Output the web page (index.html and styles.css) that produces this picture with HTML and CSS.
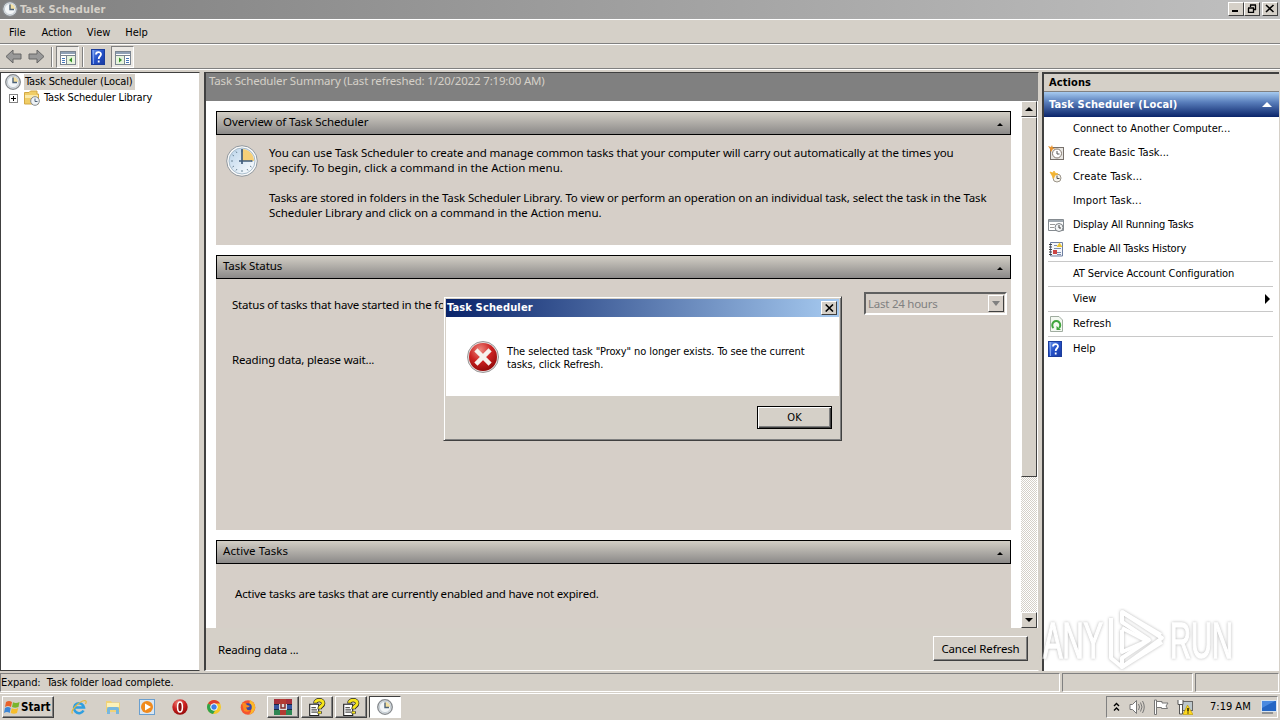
FILE: index.html
```html
<!DOCTYPE html>
<html lang="en">
<head>
    <meta charset="UTF-8">
    <meta name="viewport" content="width=device-width, initial-scale=1.0">
    <title>Task Scheduler</title>
    <link rel="stylesheet" href="styles.css">
</head>
<body>
    <!-- shared icons -->
    <svg class="defs">
        <defs>
            <linearGradient id="blueBook" x1="0" y1="0" x2="1" y2="1">
                <stop offset="0" stop-color="#6f9af0"/><stop offset=".5" stop-color="#2450c8"/><stop offset="1" stop-color="#1a3aa0"/>
            </linearGradient>
            <radialGradient id="redBall" cx=".4" cy=".25" r=".8">
                <stop offset="0" stop-color="#ee8a80"/><stop offset=".5" stop-color="#cc2222"/><stop offset="1" stop-color="#8e0808"/>
            </radialGradient>
            <linearGradient id="face" x1="0" y1="0" x2="1" y2="1">
                <stop offset="0" stop-color="#b9d3ea"/><stop offset="1" stop-color="#fff"/>
            </linearGradient>
            <symbol id="clock" viewBox="0 0 16 16">
                <circle cx="8" cy="8" r="7.3" fill="#e0e4e7" stroke="#85898d" stroke-width="1.3"/>
                <circle cx="8" cy="8" r="5.6" fill="#f3f6f8" stroke="#b5c0c8" stroke-width=".7"/>
                <path d="M8 8V3a5 5 0 0 1 5 5z" fill="#f3dfa0"/>
                <path d="M8 3.5V8.5H12" fill="none" stroke="#4d6378" stroke-width="1.4"/>
            </symbol>
            <symbol id="bigclock" viewBox="0 0 32 32">
                <circle cx="16" cy="16" r="15.3" fill="#fbfbfb" stroke="#8f969c" stroke-width="1"/>
                <circle cx="16" cy="16" r="13" fill="url(#face)" stroke="#a8bccb" stroke-width="1"/>
                <path d="M16 16V4a12 12 0 0 1 12 12z" fill="#f6cf78"/>
                <path d="M16 5v2M16 25v2M5 16h2M25 16h2M10 6.500l1 1.500M22 25.500l-1-1.500M6.500 22l1.500-1M6.500 10l1.500 1M25.500 22l-1.500-1M10 25.500l1-1.500" stroke="#6f8798"/>
                <path d="M16 4V19M13 16H26" stroke="#425d7c" stroke-width="1.700"/>
            </symbol>
            <symbol id="help" viewBox="0 0 14 16">
                <rect x=".5" y=".5" width="13" height="15" fill="url(#blueBook)" stroke="#1c3d9c"/>
                <path d="M2.500 1V15" stroke="#7da2ee"/>
                <path d="M5 5.500C5 2.300 10 2.300 10 5.300 10 7.300 7.700 7.300 7.700 10M7.700 11.500V13.500" fill="none" stroke="#fff" stroke-width="1.800"/>
            </symbol>
            <symbol id="window" viewBox="0 0 16 14">
                <rect x=".5" y=".5" width="15" height="13" fill="#fff" stroke="#7b8590"/>
                <path d="M1 2H15" stroke="#8fa0b5" stroke-width="2"/>
                <path d="M1 4.500H15" stroke="#7b8590"/>
            </symbol>
            <symbol id="notehelp" viewBox="0 0 16 16">
                <path d="M1.500 5.500H9.500V15.500H1.500z" fill="#fff" stroke="#222"/>
                <path d="M3 8.500H7M3 10.500H8M3 12.500H8" stroke="#555"/>
                <path d="M6.500 4.800C6.500 1 13.500 1 13.500 4.600 13.500 7.300 10.300 7 10.300 10M10.300 11.800V14" fill="none" stroke="#222" stroke-width="3.800"/>
                <path d="M6.500 4.300C6.500 1 13.500 1 13.500 4.600 13.500 7.300 10.300 7 10.300 9.500M10.300 12V13.800" fill="none" stroke="#f6e51c" stroke-width="2.600"/>
            </symbol>
        </defs>
    </svg>

    <div class="titlebar">
        <svg class="i16"><use href="#clock"/></svg>
        <span class="title">Task Scheduler</span>
        <div class="winbtns">
            <span class="winbtn"><svg width="10" height="9"><path d="M1 7H7" stroke="#000" stroke-width="2"/></svg></span>
            <span class="winbtn"><svg width="10" height="9"><path d="M3 1H9M3.500 1V3M8.500 1V6M7 5.500H9M1 4H7M1.500 4V8.500H6.500V4" fill="none" stroke="#000" stroke-width="1.300"/></svg></span>
            <span class="winbtn close"><svg width="10" height="9"><path d="M1 1L8.500 8M8.500 1L1 8" stroke="#000" stroke-width="1.600"/></svg></span>
        </div>
    </div>

    <div class="menubar">
        <span class="m-file">File</span><span class="m-action">Action</span><span class="m-view">View</span><span class="m-help">Help</span>
    </div>

    <div class="toolbar">
        <svg class="arrow" viewBox="0 0 17 15"><path d="M1 7.500L8 1V5H16V10H8V14z" fill="#999" stroke="#666"/></svg>
        <svg class="arrow" viewBox="0 0 17 15"><path d="M16 7.500L9 1V5H1V10H9V14z" fill="#999" stroke="#666"/></svg>
        <i class="vsep"></i>
        <span class="tool on"><svg width="17" height="14"><use href="#window" width="16" height="14"/><path d="M2 7.500H5M2 9.500H5M2 11.500H5" stroke="#4777b8"/><rect x="7" y="5" width="8" height="8" fill="#e7f4dd"/><path d="M6.500 5V13" stroke="#7b8590"/><path d="M12 6.500V11.500L9 9z" fill="#35912c"/></svg></span>
        <i class="vsep"></i>
        <svg class="booktool"><use href="#help"/></svg>
        <span class="tool on"><svg width="17" height="14"><use href="#window" width="16" height="14"/><path d="M11 7.500H14M11 9.500H14M11 11.500H14" stroke="#4777b8"/><rect x="1" y="5" width="8" height="8" fill="#e7f4dd"/><path d="M9.500 5V13" stroke="#7b8590"/><path d="M4 6.500V11.500L7 9z" fill="#35912c"/></svg></span>
    </div>

    <div class="panes">
        <div class="tree">
            <div class="node root"><svg class="i16"><use href="#clock"/></svg><span class="selected">Task Scheduler (Local)</span></div>
            <div class="node child">
                <svg class="plus" width="9" height="9"><rect x=".5" y=".5" width="8" height="8" fill="#fff" stroke="#848484"/><path d="M2 4.500H7M4.500 2V7" stroke="#000"/></svg>
                <svg class="i16" viewBox="0 0 16 16"><path d="M.5 2.500H5L6.500 1H13V4H14.500V14H.500z" fill="#f0cd66" stroke="#d3a843"/><path d="M1 5H14V8H1z" fill="#fae9a8"/><circle cx="11" cy="11" r="4.300" fill="#eef2f5" stroke="#84898e"/><path d="M11 8.500V11.500H13.500" fill="none" stroke="#4d6378"/></svg>
                <span>Task Scheduler Library</span>
            </div>
        </div>

        <div class="summary">
            <div class="summary-head">Task Scheduler Summary (Last refreshed: 1/20/2022 7:19:00 AM)</div>
            <div class="summary-body">
                <div class="cards">
                    <div class="card overview">
                        <div class="card-head"><span class="h1">Overview of Task Scheduler</span><i class="up"></i></div>
                        <div class="card-text">
                            <svg class="i32"><use href="#bigclock"/></svg>
                            <div>
                                <p class="l1">You can use Task Scheduler to create and manage common tasks that your computer will carry out automatically at the times you</p>
                                <p class="l2">specify. To begin, click a command in the Action menu.</p>
                                <p class="l3">Tasks are stored in folders in the Task Scheduler Library. To view or perform an operation on an individual task, select the task in the Task</p>
                                <p class="l4">Scheduler Library and click on a command in the Action menu.</p>
                            </div>
                        </div>
                    </div>
                    <div class="card status">
                        <div class="card-head"><span class="h2">Task Status</span><i class="up"></i></div>
                        <div class="filter">
                            <span class="period">Status of tasks that have started in the fo</span>
                            <div class="combo"><span>Last 24 hours</span><b><i></i></b></div>
                        </div>
                        <p class="reading">Reading data, please wait...</p>
                    </div>
                    <div class="card active">
                        <div class="card-head"><span class="h3">Active Tasks</span><i class="up"></i></div>
                        <p class="expired">Active tasks are tasks that are currently enabled and have not expired.</p>
                    </div>
                </div>
                <div class="scrollbar">
                    <span class="sbtn"><i class="tri-up"></i></span>
                    <span class="thumb"></span>
                    <span class="track"></span>
                    <span class="sbtn"><i class="tri-down"></i></span>
                </div>
            </div>
            <div class="summary-foot">
                <span class="busy">Reading data ...</span>
                <button class="cancel">Cancel Refresh</button>
            </div>
        </div>

        <div class="actions">
            <div class="actions-head">Actions</div>
            <div class="group"><span>Task Scheduler (Local)</span><i></i></div>
            <ul>
                <li><i class="ico"></i><span class="a1">Connect to Another Computer...</span></li>
                <li><i class="ico"><svg viewBox="0 0 16 16"><rect x="2.500" y="2.500" width="13" height="12" fill="#e8e6e2" stroke="#77706a"/><circle cx="9" cy="8.500" r="4.500" fill="#fff" stroke="#857a70"/><path d="M9 6V9H11.500" fill="none" stroke="#555"/><path d="M0 1L3 2 4 0 5 3 8 3 5 4 3 7 2 4z" fill="#e89432"/></svg></i><span class="a2">Create Basic Task...</span></li>
                <li><i class="ico"><svg viewBox="0 0 16 16"><circle cx="9" cy="9" r="4" fill="#f6f3ea" stroke="#9b958a"/><path d="M9 6.500V9.500H11.500" fill="none" stroke="#555"/><path d="M2 3L5 4 6 2 7 4 10 5 7 6 5.500 9.500 4 6.500z" fill="#f2b432" stroke="#f2b432" stroke-width=".800"/></svg></i><span class="a3">Create Task...</span></li>
                <li><i class="ico"></i><span class="a4">Import Task...</span></li>
                <li><i class="ico"><svg viewBox="0 0 16 16"><path d="M.500 2.500H15.500V13.500H.500z" fill="#fff" stroke="#858b90"/><path d="M1 4H15" stroke="#9fa8b0" stroke-width="2"/><path d="M2 7.500H7M2 10.500H6" stroke="#999"/><circle cx="11" cy="10.500" r="4" fill="#f2f4f5" stroke="#7b8085"/><path d="M11 8V11H13" fill="none" stroke="#444"/></svg></i><span class="a5">Display All Running Tasks</span></li>
                <li><i class="ico"><svg viewBox="0 0 16 16"><path d="M2.500 1.500H14.500V15H2.500z" fill="#f3f5fa" stroke="#6e7fa0"/><path d="M1 3.500H4M1 6H4M1 8.500H4M1 11H4M1 13.500H4" stroke="#444"/><path d="M6 4.500H9M6 7.500H13M9 11.500H13M9 13.500H13" stroke="#7b8cad"/><path d="M8.500 6L11.500 1.500 14.500 6z" fill="#edc52f"/><rect x="5" y="9" width="4" height="4" fill="#c44"/></svg></i><span class="a6">Enable All Tasks History</span></li>
                <li class="line"><i class="ico"></i><span class="a7">AT Service Account Configuration</span></li>
                <li class="line"><i class="ico"></i><span class="a8">View</span><i class="more"></i></li>
                <li class="line"><i class="ico"><svg viewBox="0 0 16 16"><path d="M2.500.500H11L14.500 4V15.500H2.500z" fill="#f4f9f2" stroke="#a0aca0"/><path d="M5.500 12A4 4 0 1 1 11 12" fill="none" stroke="#3fa53c" stroke-width="2"/><path d="M8.500 10V14H13z" fill="#3fa53c"/></svg></i><span class="a9">Refresh</span></li>
                <li class="line"><i class="ico"><svg viewBox="0 0 16 16"><use href="#help" width="14" height="16"/></svg></i><span class="a10">Help</span></li>
            </ul>
        </div>
    </div>

    <div class="statusbar">
        <div class="cell main">Expand:&nbsp; Task folder load complete.</div>
        <div class="cell mid"></div>
        <div class="cell last"></div>
    </div>

    <div class="taskbar">
        <button class="start">
            <svg width="16" height="16" viewBox="0 0 16 16"><path d="M2 3Q5 1 8 3L7 8Q4 6 1 8z" fill="#e8622a"/><path d="M9 3.300Q12 5 15.500 3L14.500 8Q11 9.500 8 8z" fill="#79b52d"/><path d="M1 9Q4 7 6.700 9L5.700 14Q3 12 0 14z" fill="#3c86d6"/><path d="M7.700 9.300Q11 11 14.200 9L13 14Q10 15.500 6.700 14z" fill="#f6bd2b"/></svg>
            <span>Start</span>
        </button>
        <div class="quick">
            <svg viewBox="0 0 16 16"><path d="M12.500 11.500A5 5 0 1 1 13 8.500H4" fill="none" stroke="#2f9fe0" stroke-width="2.500"/><path d="M1.500 14.500C-1 12 8 2 14 1.500 16 2 15 4 14.500 5" fill="none" stroke="#e6b93c" stroke-width="1.200"/></svg>
            <svg viewBox="0 0 16 16"><path d="M1 2H6L7 3.500H15V13H1z" fill="#f0d277"/><path d="M2 4H14V8H2z" fill="#fcf1b8"/><path d="M2 15V10Q2 8 4 8H12Q14 8 14 10V15H11V11H5V15z" fill="#77b7de"/></svg>
            <svg viewBox="0 0 16 16"><rect x=".500" y=".500" width="15" height="15" fill="#d9e6f2" stroke="#6a9fcf"/><circle cx="8" cy="8" r="6" fill="#f08a1d"/><path d="M6 4.500V11.500L12 8z" fill="#fff"/></svg>
            <svg viewBox="0 0 16 16"><circle cx="8" cy="8" r="7.700" fill="url(#redBall)"/><ellipse cx="8" cy="8" rx="2.400" ry="5" fill="#8a1010" stroke="#fff" stroke-width="1.500"/></svg>
            <svg viewBox="0 0 16 16"><circle cx="8" cy="8" r="7" fill="#f6c927"/><path d="M8 8L2 4.500A7 7 0 0 1 14 4.500H8z" fill="#df3c30"/><path d="M8 8L2 4.500A7 7 0 0 0 7 15L10 10z" fill="#2ea24c"/><circle cx="8" cy="8" r="3.300" fill="#3f7fe8" stroke="#fff"/></svg>
            <svg viewBox="0 0 16 16"><circle cx="8" cy="8.500" r="7.300" fill="#f5542f"/><path d="M10 1Q16 4 15 10 13 15 9 15.500 14 10 9 6z" fill="#fbb829"/><circle cx="8" cy="8" r="3.800" fill="#3545a8"/><path d="M2 4Q5 3 7 6L10 7Q8 9 6 8.500 7 12 11 11 8 14 4 12z" fill="#fa8a20"/></svg>
        </div>
        <div class="tasks">
            <span class="task"><svg class="rar" viewBox="0 0 18 16"><path d="M0 0H18V5H0z" fill="#a62f3a"/><path d="M0 5H18V11H0z" fill="#3654a0"/><path d="M0 11H18V16H0z" fill="#2d8653"/><path d="M0 5.500H18M0 10.500H18" stroke="#1b2745"/><rect x="6" y="0" width="6" height="16" fill="#b33b32"/><rect x="5" y="5" width="8" height="6" fill="#ddd"/><path d="M7 5V9H11V5" fill="none" stroke="#852b2b" stroke-width="1.500"/></svg></span>
            <span class="task"><svg class="i18"><use href="#notehelp"/></svg></span>
            <span class="task"><svg class="i18"><use href="#notehelp"/></svg></span>
            <span class="task pressed"><svg class="i16"><use href="#clock"/></svg></span>
        </div>
        <div class="tray">
            <svg class="chev" viewBox="0 0 7 10"><path d="M1 4L3.500 1.500 6 4M1 8.500L3.500 6 6 8.500" fill="none" stroke="#000" stroke-width="1.400"/></svg>
            <svg class="i16" viewBox="0 0 16 16"><path d="M1 5.500H3.500L7.500 1.500V14.500L3.500 10.500H1z" fill="#fff" stroke="#777"/><path d="M9.500 5Q11.500 8 9.500 11M11.500 3.500Q14.500 8 11.500 12.500M13.500 2Q17 8 13.500 14" fill="none" stroke="#777"/></svg>
            <svg class="flag" viewBox="0 0 16 16"><path d="M1.500 1V15.500H3.500V1z" fill="#fff" stroke="#777"/><path d="M3.500 2.500H9V4H15L13 7 14.500 9.500H8.500V8.500H3.500z" fill="#fff" stroke="#777"/></svg>
            <svg class="net" viewBox="0 0 16 16"><rect x="5.500" y="2.500" width="10" height="9" fill="#bcc7cc" stroke="#666"/><path d="M1 1V5.500H6V1M2.500 5.500V15H5.500V5.500" fill="#fff" stroke="#555"/><path d="M10.500 6L16 15.500H6z" fill="#ffd91c" stroke="#b99500" stroke-width=".600"/><path d="M11 9V12.500M11 13.500V14.500" stroke="#000" stroke-width="1.300"/></svg>
            <span class="time">7:19 AM</span>
            <svg class="desk" viewBox="0 0 16 14"><rect x=".500" y=".500" width="15" height="11" fill="#2466c4" stroke="#d8e4ee"/><path d="M1 8L14 1H1z" fill="#4a8ae0"/><path d="M1 13H12" stroke="#4a5560"/></svg>
        </div>
    </div>

    <div class="dialog">
        <div class="dialog-title"><span>Task Scheduler</span><b><svg width="9" height="8"><path d="M.700 .500L8 7.500M8 .500L.700 7.500" stroke="#000" stroke-width="1.600"/></svg></b></div>
        <div class="dialog-body">
            <svg class="i32" viewBox="0 0 32 32"><circle cx="16" cy="16" r="15.500" fill="#e7dcdc" stroke="#999"/><circle cx="16" cy="16" r="14" fill="url(#redBall)"/><path d="M10.500 10.500L21.500 21.500M21.500 10.500L10.500 21.500" stroke="#f6f2ee" stroke-width="4.500" stroke-linecap="square"/></svg>
            <div>
                <p class="d1">The selected task "Proxy" no longer exists. To see the current</p>
                <p class="d2">tasks, click Refresh.</p>
            </div>
        </div>
        <div class="dialog-foot"><button class="ok">OK</button></div>
    </div>

    <svg class="watermark" width="215" height="66" viewBox="0 0 215 66">
        <g class="mark">
            <text x="4" y="50" textLength="60" lengthAdjust="spacingAndGlyphs">ANY</text>
            <text x="131" y="50" textLength="63" lengthAdjust="spacingAndGlyphs">RUN</text>
            <path d="M72 10V50L83 59 123 34M83 22V44L108 33 83 20M83 4L122 27" />
            <path d="M83 4L123 30 83 59V50L110 32 83 14z"/>
        </g>
    </svg>
</body>
</html>
```
FILE: styles.css
```css
* {
    box-sizing: border-box;
}
body {
    margin: 0;
    width: 1280px;
    height: 720px;
    overflow: hidden;
    display: flex;
    flex-direction: column;
    position: relative;
    background: #d5d0c8;
    color: #000;
    font-family: "DejaVu Sans Condensed", "DejaVu Sans", sans-serif;
    font-size: 11px;
    line-height: 14px;
    white-space: nowrap;
}
p, ul {
    margin: 0;
    padding: 0;
    list-style: none;
}
button {
    font: inherit;
    color: #000;
    padding: 0;
    border-radius: 0;
    background: #d5d0c8;
}
svg, i {
    display: block;
    flex: none;
}
.defs {
    position: absolute;
    width: 0;
    height: 0;
}
.i16 { width: 16px; height: 16px; }
.i18 { width: 18px; height: 18px; }
.i32 { width: 32px; height: 32px; }

/* title bar */
.titlebar {
    height: 19px;
    flex: none;
    display: flex;
    align-items: center;
    padding: 0 2px 1px 2px;
    background: linear-gradient(90deg, #808080, #c0c0c0);
    color: #d5d0c8;
    font-weight: bold;
}
.title {
    margin: 1px 0 0 2px;
    letter-spacing: .12px;
}
.winbtns {
    margin-left: auto;
    display: flex;
}
.winbtn {
    width: 16px;
    height: 14px;
    padding: 1px 2px;
    background: #d5d0c8;
    border: 1px solid;
    border-color: #fff #404040 #404040 #fff;
}
.winbtn.close { margin-left: 2px; }

/* menu and toolbar */
.menubar {
    height: 25px;
    flex: none;
    display: flex;
    padding: 6px 0 0 9px;
    border-top: 1px solid #fff;
    border-bottom: 1px solid #808080;
}
.menubar span { margin-right: 15px; }
.m-action { letter-spacing: -.1px; }
.menubar .m-file { margin-right: 16px; }
.toolbar {
    height: 25px;
    flex: none;
    display: flex;
    align-items: center;
    padding-left: 5px;
    border-top: 1px solid #fff;
    border-bottom: 1px solid #808080;
}
.arrow {
    width: 17px;
    height: 15px;
    margin-right: 6px;
}
.vsep {
    width: 2px;
    height: 20px;
    background: #808080;
    border-right: 1px solid #fff;
}
.tool {
    width: 23px;
    height: 22px;
    margin: 0 3px;
    padding: 4px 3px;
    background: #ebe8e3;
    border: 1px solid;
    border-color: #808080 #fff #fff #808080;
}
.booktool {
    width: 14px;
    height: 16px;
    margin: 0 3px 0 7px;
}

/* three panes */
.panes {
    height: 602px;
    flex: none;
    display: flex;
    padding-top: 2px;
    border-top: 1px solid #fff;
}
.tree {
    width: 200px;
    padding-top: 1px;
    background: #fff;
    border: 1px solid #404040;
    border-right-color: #d5d0c8;
}
.node {
    display: flex;
    align-items: center;
    height: 16px;
}
.root { padding-left: 4px; }
.child { padding-left: 8px; }
.plus { margin-right: 6px; }
.child span {
    margin-left: 4px;
    letter-spacing: -.16px;
}
.selected {
    height: 16px;
    line-height: 15px;
    margin-left: 3px;
    padding: 0 2px 0 1px;
    background: #d5d0c8;
    letter-spacing: -.13px;
}
.summary {
    width: 835px;
    margin-left: 4px;
    display: flex;
    flex-direction: column;
    border: solid #404040;
    border-width: 1px 1px 1px 2px;
    border-right-color: #d5d0c8;
    border-bottom-color: #fff;
    font-family: "Noto Sans", sans-serif;
    font-size: 11.5px;
    line-height: 15px;
}
.summary-head {
    height: 28px;
    padding-left: 3px;
    background: #808080;
    color: #d5d0c8;
    letter-spacing: -.17px;
}
.summary-body {
    height: 527px;
    display: flex;
    background: #fff;
}
.cards {
    width: 815px;
    padding: 10px 10px 0;
    overflow: hidden;
}
.card {
    margin-bottom: 10px;
    background: #d6cfc8;
}
.overview { height: 134px; }
.status { height: 275px; }
.active { height: 88px; }
.card-head {
    height: 24px;
    display: flex;
    justify-content: space-between;
    padding: 2px 7px 0 6px;
    border: 1px solid #000;
    background: linear-gradient(#d2cec5, #8b8988);
}
.h1 { letter-spacing: -.08px; }
.h2 { letter-spacing: -.1px; }
.h3 { letter-spacing: .05px; }
.up, .tri-up, .group i {
    width: 0;
    height: 0;
    border: solid transparent;
    border-width: 0 3px 3px;
    border-bottom-color: #000;
}
.up { margin-top: 9px; }
.card-text {
    display: flex;
    padding: 10px 0 0 10px;
}
.card-text > div {
    margin-left: 11px;
}
.l1 { letter-spacing: -.104px; }
.l3 {
    margin-top: 15px;
    letter-spacing: -.135px;
}
.l4 { letter-spacing: -.07px; }
.filter {
    display: flex;
    justify-content: space-between;
    padding: 13px 4px 0 16px;
}
.period {
    padding-top: 5px;
    letter-spacing: -.2px;
}
.combo {
    width: 143px;
    height: 23px;
    display: flex;
    justify-content: space-between;
    padding: 1px;
    border: 2px solid;
    border-color: #606060 #fff #fff #606060;
    color: #808080;
}
.combo span {
    padding: 1px 0 0 1px;
    letter-spacing: -.25px;
}
.combo b {
    width: 16px;
    height: 17px;
    padding: 5px 0 0 3px;
    border: 1px solid;
    border-color: #fff #404040 #404040 #fff;
}
.combo i {
    width: 8px;
    border: solid transparent;
    border-width: 5px 4px 0;
    border-top-color: #808080;
}
.reading {
    padding: 37px 0 0 16px;
    letter-spacing: -.18px;
}
.expired {
    padding: 22px 0 0 19px;
    letter-spacing: -.2px;
}
.scrollbar {
    width: 16px;
    display: flex;
    flex-direction: column;
}
.sbtn, .thumb {
    background: #d5d0c8;
    border: 1px solid;
    border-color: #fff #404040 #404040 #fff;
}
.sbtn {
    height: 16px;
    padding: 5px 0 0 3px;
}
.tri-up { border-width: 0 4px 4px; }
.tri-down {
    width: 0;
    border: solid transparent;
    border-width: 4px 4px 0;
    border-top-color: #000;
}
.thumb { height: 360px; }
.track {
    flex: 1;
    background: repeating-conic-gradient(#fff 0 25%, #d5d0c8 0 50%) 0 0 / 2px 2px;
}
.summary-foot {
    flex: 1;
    display: flex;
    justify-content: space-between;
    padding: 8px 10px 0 12px;
}
.busy {
    padding-top: 6px;
    letter-spacing: -.2px;
}
.cancel {
    width: 95px;
    height: 25px;
    border: 1px solid;
    border-color: #fff #404040 #404040 #fff;
    box-shadow: inset -1px -1px #808080;
    letter-spacing: -.13px;
}

/* actions pane */
.actions {
    flex: 1;
    margin-left: 3px;
    margin-right: 1px;
    background: #fff;
    border: solid #404040;
    border-width: 2px 0 0 2px;
}
.actions-head {
    height: 17px;
    padding: 2px 0 0 5px;
    background: #d5d0c8;
    font-weight: bold;
    letter-spacing: .1px;
}
.group {
    height: 26px;
    display: flex;
    justify-content: space-between;
    align-items: center;
    padding: 0 7px 0 5px;
    border-top: 1px solid #808080;
    background: linear-gradient(#a6caf0, #5a7fbc 40%, #0a246a);
    color: #fff;
    font-weight: bold;
    letter-spacing: .14px;
}
.group i {
    border-width: 0 5px 5px;
    border-bottom-color: #fff;
}
.actions li {
    height: 24px;
    display: flex;
    align-items: center;
    margin: 0 6px 0 4px;
}
.actions li.line {
    height: 25px;
    border-top: 1px solid #c8c8c8;
}
.ico {
    width: 25px;
    height: 16px;
}
.ico svg {
    width: 16px;
    height: 16px;
}
.a3 { letter-spacing: .2px; }
.a4 { letter-spacing: .15px; }
.a5 { letter-spacing: -.18px; }
.a6 { letter-spacing: -.16px; }
.a7 { letter-spacing: -.12px; }
.a9 { letter-spacing: .15px; }
.more {
    margin-left: auto;
    margin-right: 3px;
    border: solid transparent;
    border-width: 5px 0 5px 5px;
    border-left-color: #000;
}

/* status bar */
.statusbar {
    height: 22px;
    flex: none;
    display: flex;
    gap: 2px;
    padding: 2px 1px 1px 0;
}
.cell {
    border: 1px solid;
    border-color: #808080 #fff #fff #808080;
}
.cell.main {
    width: 1060px;
    padding-top: 2px;
    letter-spacing: -.11px;
}
.cell.mid { width: 131px; }
.cell.last { flex: 1; }

/* taskbar */
.taskbar {
    flex: 1;
    display: flex;
    padding: 2px 2px 0 2px;
    border-top: 1px solid #fff;
}
.start {
    width: 52px;
    height: 22px;
    display: flex;
    align-items: center;
    padding-left: 1px;
    border: 1px solid;
    border-color: #fff #404040 #404040 #fff;
    box-shadow: inset -1px -1px #808080;
    font-weight: bold;
    font-size: 11.5px;
}
.start span { margin-left: 1px; }
.quick {
    display: flex;
    gap: 17.8px;
    padding: 3px 0 0 17px;
}
.quick svg {
    width: 16px;
    height: 16px;
}
.tasks {
    display: flex;
    gap: 2px;
    margin-left: 11px;
}
.task {
    width: 32px;
    height: 22px;
    display: flex;
    align-items: center;
    justify-content: center;
    border: 1px solid;
    border-color: #fff #404040 #404040 #fff;
    box-shadow: inset -1px -1px #808080;
}
.task.pressed {
    background: #fff;
    border-color: #404040 #fff #fff #404040;
    box-shadow: none;
}
.rar { width: 18px; height: 16px; }
.tray {
    width: 172px;
    height: 22px;
    margin-left: auto;
    display: flex;
    align-items: center;
    padding-left: 6px;
    border: 1px solid;
    border-color: #808080 #fff #fff #808080;
}
.chev { width: 7px; height: 10px; margin-right: 9px; }
.flag { width: 16px; height: 16px; margin-left: 8px; }
.net { width: 16px; height: 16px; margin-left: 8px; }
.time { margin-left: 17px; }
.desk { width: 16px; height: 14px; margin-left: auto; }

/* message box */
.dialog {
    position: absolute;
    left: 443px;
    top: 296px;
    width: 399px;
    height: 145px;
    padding: 2px 1px 1px 2px;
    background: #d5d0c8;
    border: 1px solid;
    border-color: #d5d0c8 #404040 #404040 #d5d0c8;
    box-shadow: inset 1px 1px #fff, inset -1px -1px #808080;
}
.dialog-title {
    height: 18px;
    margin-right: 1px;
    display: flex;
    justify-content: space-between;
    align-items: center;
    padding: 0 2px 0 1px;
    background: linear-gradient(90deg, #0a246a, #a6caf0);
    color: #fff;
    font-weight: bold;
    letter-spacing: .14px;
}
.dialog-title b {
    width: 16px;
    height: 14px;
    padding: 2px 3px;
    background: #d5d0c8;
    border: 1px solid;
    border-color: #fff #404040 #404040 #fff;
}
.dialog-body {
    height: 79px;
    margin-right: 1px;
    display: flex;
    padding: 24px 0 0 21px;
    background: #fff;
    line-height: 13px;
}
.dialog-body > div {
    margin: 4px 0 0 8px;
}
.d1 { letter-spacing: -.1px; }
.d2 { letter-spacing: -.08px; }
.dialog-foot {
    display: flex;
    justify-content: flex-end;
    padding: 10px 8px 0 0;
}
.ok {
    width: 75px;
    height: 23px;
    border: 1px solid #000;
    box-shadow: inset 1px 1px #fff, inset -1px -1px #404040, inset -2px -2px #808080;
}

/* watermark over the corner */
.watermark {
    position: absolute;
    left: 1039px;
    top: 608px;
}
.mark {
    font-family: "Liberation Sans", sans-serif;
    font-size: 50px;
    fill: #fff;
    opacity: .7;
    filter: drop-shadow(0 0 1.500px #999);
}
.mark text {
    stroke: #fff;
    stroke-width: 1.500px;
}
.mark path {
    fill: none;
    stroke: #fff;
    stroke-width: 4;
    stroke-linejoin: round;
}
```
